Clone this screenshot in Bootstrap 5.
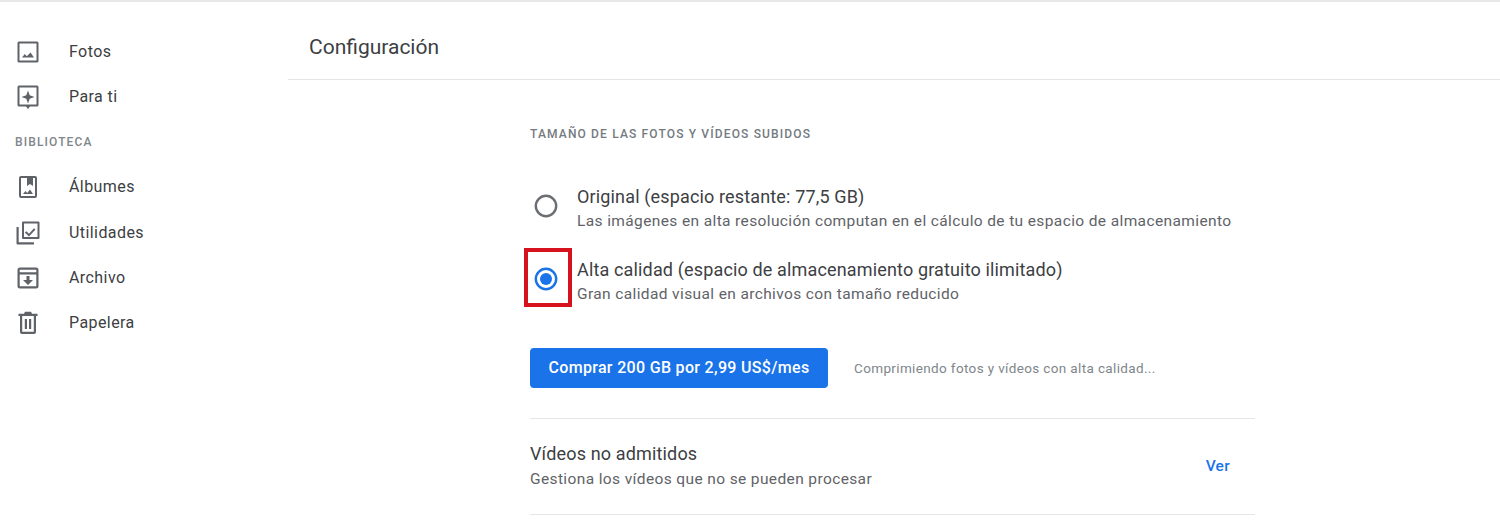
<!doctype html>
<html lang="es"><head><meta charset="utf-8">
<link href="https://cdn.jsdelivr.net/npm/bootstrap@5.3.0/dist/css/bootstrap.min.css" rel="stylesheet">
<style>
html,body{height:529px;overflow:hidden;background:#fff}
body{font-family:Roboto,"Liberation Sans",sans-serif;color:#3c4043}
.topline{height:2px;background:#e8e8e8}
.side{width:288px;flex:none;padding-top:27px}
.sitem{height:45.3px;padding-left:16px;gap:29px;font-size:16px;letter-spacing:.42px;color:#3c4043}
.sitem svg{width:24px;height:24px;flex:none;fill:#5f6368}
.slabel{font-size:12px;letter-spacing:1.12px;color:#80868b;font-weight:500;padding-left:15px;height:45px;line-height:44px}
.mainp{flex:1}
.head{height:78px;border-bottom:1px solid #e6e6e6;padding-left:21px;padding-top:14px;font-size:21px;color:#3c4043}
.body-col{width:725px;margin-left:242px}
.sect{font-size:12px;letter-spacing:1.15px;color:#757a7f;font-weight:500;padding-top:45px;height:88px}
.ropt{height:73px}
.ricon{width:48px;height:59px;flex:none;margin-left:-6px;padding-right:4px;margin-right:5px;padding-top:3px;display:flex;align-items:center;justify-content:center}
.rtext{margin-top:10px}
.ropt .t1{font-size:18px;line-height:24px;color:#3c4043;letter-spacing:.15px}
.ropt .t2{font-size:15.5px;line-height:25px;color:#5f6368;letter-spacing:.38px}
.redbox{border:4px solid #d5121e}
.buy{background:#1a73e8;color:#fff;font-size:16px;font-weight:500;border:0;border-radius:4px;width:298px;height:40px;padding:0;letter-spacing:.32px}
.buy:hover{background:#1a73e8;color:#fff}
.buyrow{margin-top:34px;gap:26px;padding-bottom:30px;border-bottom:1px solid #e6e6e6}
.note{font-size:13.5px;color:#80868b;letter-spacing:.36px}
.vrow{height:96px;border-bottom:1px solid #e6e6e6;padding-right:25px}
.vrow .t1{font-size:18px;line-height:24px;letter-spacing:.15px}
.vrow .t2{font-size:15.5px;line-height:26px;color:#5f6368;letter-spacing:.38px}
.ver{color:#1a73e8;font-size:15.5px;font-weight:500;letter-spacing:.3px;text-decoration:none}
</style></head><body>
<div class="topline"></div>
<div class="d-flex">
<nav class="side">
<div class="sitem d-flex align-items-center"><svg viewBox="0 0 24 24"><path d="M3 1.500h18A1.500 1.500 0 0 1 22.500 3v18a1.500 1.500 0 0 1-1.500 1.500H3A1.500 1.500 0 0 1 1.500 21V3A1.500 1.500 0 0 1 3 1.500zm.500 2v17h17v-17h-17zm11 9 3.500 5H6l2.800-3.600 2 2.400 3.700-3.800z"/></svg><span>Fotos</span></div>
<div class="sitem d-flex align-items-center"><svg viewBox="0 0 24 24"><path d="M3 .5h18A1.500 1.500 0 0 1 22.500 2v18a1.500 1.500 0 0 1-1.500 1.500h-7L12 24l-2-2.500H3A1.500 1.500 0 0 1 1.500 20V2A1.500 1.500 0 0 1 3 .5zm.500 2v17h17v-17h-17zm8.500 3 1.700 4.800 4.800 1.700-4.800 1.700-1.700 4.800-1.700-4.800-4.800-1.700 4.800-1.700L12 5.500z"/></svg><span>Para ti</span></div>
<div class="slabel">BIBLIOTECA</div>
<div class="sitem d-flex align-items-center"><svg viewBox="0 0 24 24"><path d="M5 1h14a2 2 0 0 1 2 2v18a2 2 0 0 1-2 2H5a2 2 0 0 1-2-2V3a2 2 0 0 1 2-2zm0 2v18h14V3h-2v8l-3-2-3 2V3H5zm9 11.500 3 4.500H7l2.500-3 1.700 2 2.800-3.500z"/></svg><span>Álbumes</span></div>
<div class="sitem d-flex align-items-center"><svg viewBox="0 0 24 24"><path d="M7 .5h15.500a1 1 0 0 1 1 1V17a1 1 0 0 1-1 1H7a1 1 0 0 1-1-1V1.500a1 1 0 0 1 1-1zm1 2V16h13.500V2.500H8zM.5 6h2.200v15.300H18v2.200H1.500a1 1 0 0 1-1-1V6zm9.800 4.200 2.700 2.500 5-5.500 1.500 1.400L13 15.600l-4.200-4 1.500-1.400z"/></svg><span>Utilidades</span></div>
<div class="sitem d-flex align-items-center"><svg viewBox="0 0 24 24"><path d="M4 1.500h16A2.500 2.500 0 0 1 22.500 4v16a2.500 2.500 0 0 1-2.500 2.500H4A2.500 2.500 0 0 1 1.500 20V4A2.500 2.500 0 0 1 4 1.500zm-.300 2.200v2.600h16.600V3.700H3.700zm0 4.800v11.800h16.600V8.500H3.700zm6.800 1.500h3v4H17l-5 5-5-5h3.500v-4z"/></svg><span>Archivo</span></div>
<div class="sitem d-flex align-items-center"><svg viewBox="0 0 24 24"><path d="M9 .8h6l1 2h5.500V5H20v16a2 2 0 0 1-2 2H6a2 2 0 0 1-2-2V5H2.500V2.800H8l1-2zM6.200 5v15.800h11.600V5H6.200zm2.600 3H11v10H8.800V8zm4.200 0h2.200v10H13V8z"/></svg><span>Papelera</span></div>
</nav>
<main class="mainp">
<div class="head d-flex align-items-center">Configuración</div>
<div class="body-col">
<div class="sect">TAMAÑO DE LAS FOTOS Y VÍDEOS SUBIDOS</div>
<div class="ropt d-flex align-items-center">
<div class="ricon"><svg width="24" height="24" viewBox="0 0 24 24"><circle cx="12" cy="12" r="10.200" fill="none" stroke="#6b6f73" stroke-width="2.400"/></svg></div>
<div class="rtext"><div class="t1">Original (espacio restante: 77,5 GB)</div><div class="t2">Las imágenes en alta resolución computan en el cálculo de tu espacio de almacenamiento</div></div>
</div>
<div class="ropt d-flex align-items-center">
<div class="ricon redbox"><svg width="24" height="24" viewBox="0 0 24 24"><circle cx="12" cy="12" r="10.200" fill="none" stroke="#1a73e8" stroke-width="2.400"/><circle cx="12" cy="12" r="6" fill="#1a73e8"/></svg></div>
<div class="rtext"><div class="t1">Alta calidad (espacio de almacenamiento gratuito ilimitado)</div><div class="t2">Gran calidad visual en archivos con tamaño reducido</div></div>
</div>
<div class="buyrow d-flex align-items-center">
<button class="btn buy" type="button">Comprar 200 GB por 2,99 US$/mes</button>
<span class="note">Comprimiendo fotos y vídeos con alta calidad...</span>
</div>
<div class="vrow d-flex align-items-center justify-content-between">
<div><div class="t1">Vídeos no admitidos</div><div class="t2">Gestiona los vídeos que no se pueden procesar</div></div>
<a class="ver" href="#">Ver</a>
</div>
</div>
</main>
</div>
<script src="https://cdn.jsdelivr.net/npm/bootstrap@5.3.0/dist/js/bootstrap.bundle.min.js"></script>
</body></html>
